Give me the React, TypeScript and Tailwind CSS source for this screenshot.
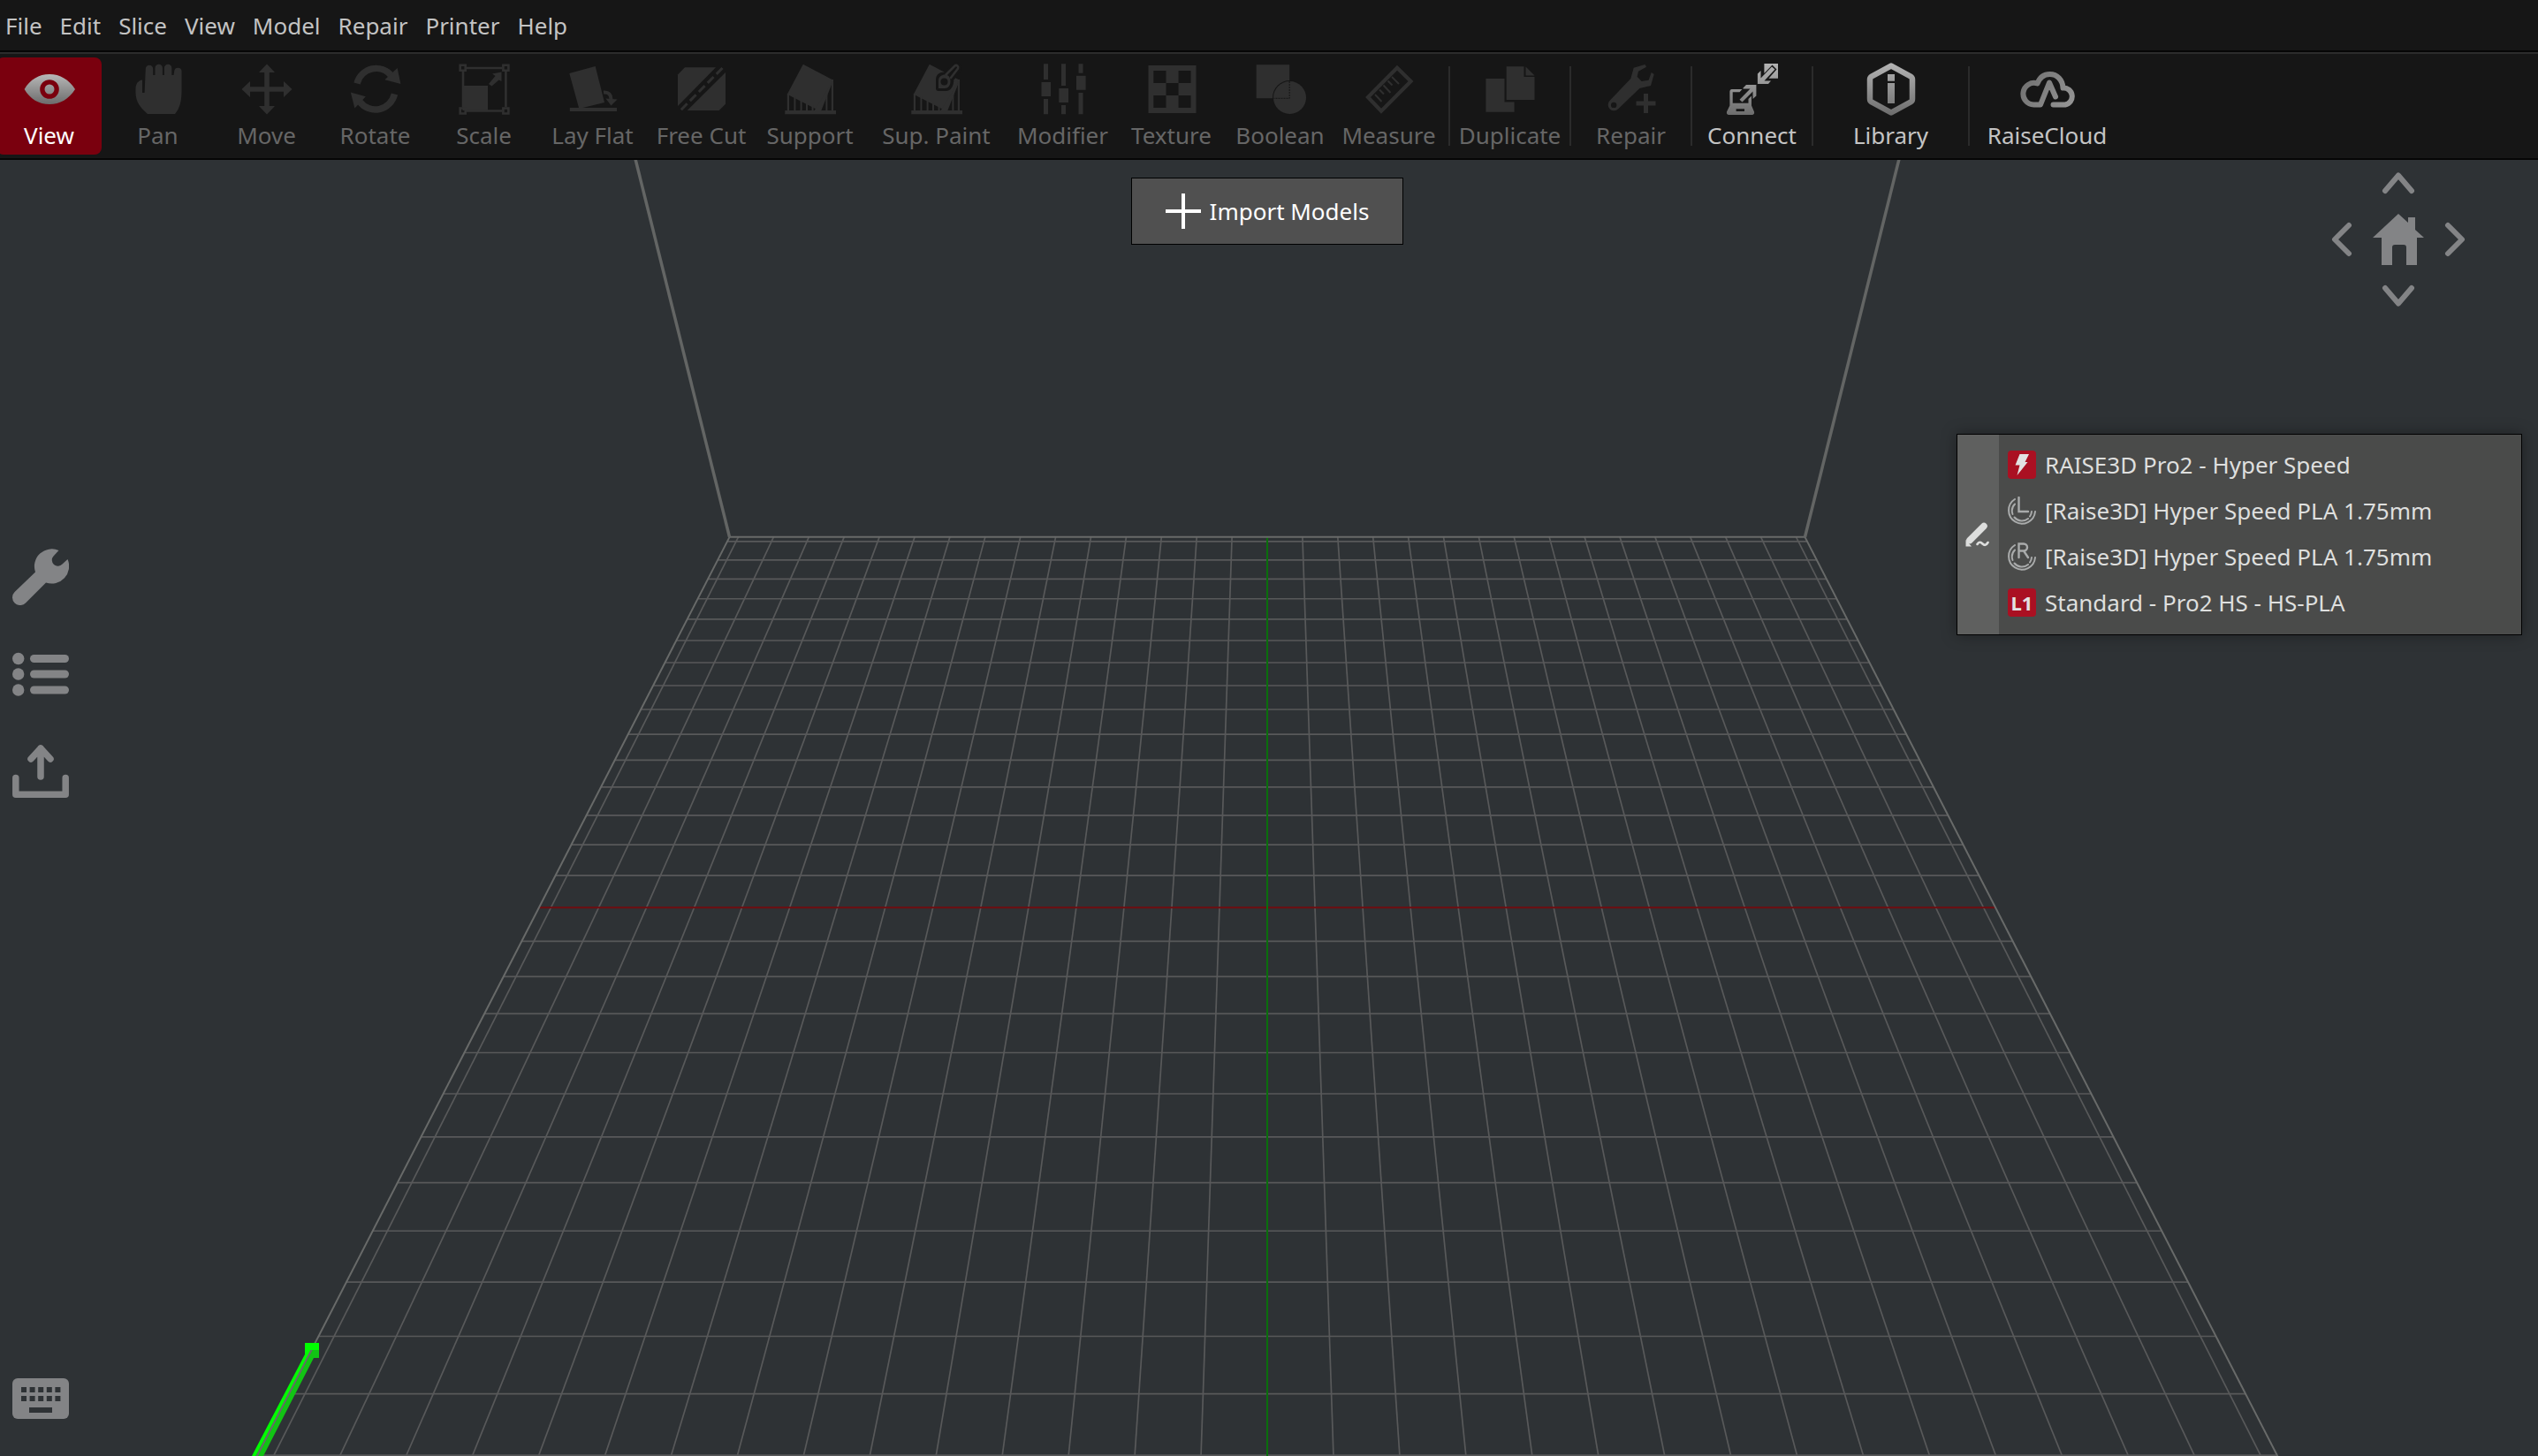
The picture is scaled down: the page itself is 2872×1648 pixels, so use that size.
import React from "react";

type Tone = "off" | "on";

/* ---------- toolbar icons (64 x 64) ---------- */

const BG = "#161616";

function Icon({ tone, children }: { tone: Tone; children: React.ReactNode }) {
  return (
    <svg
      viewBox="0 0 64 64"
      className="size-16 shrink-0"
      fill={tone === "on" ? "url(#metal)" : "#2f2f2f"}
      color="#2f2f2f"
      aria-hidden="true"
    >
      {children}
    </svg>
  );
}

function MetalGradient() {
  return (
    <svg className="absolute size-0" aria-hidden="true">
      <defs>
        <linearGradient id="metal" gradientUnits="userSpaceOnUse" x1="0" y1="2" x2="0" y2="62">
          <stop offset="0" stopColor="#b4b4b4" />
          <stop offset="1" stopColor="#6c6c6c" />
        </linearGradient>
        <linearGradient id="metalEye" gradientUnits="userSpaceOnUse" x1="0" y1="15" x2="0" y2="49">
          <stop offset="0" stopColor="#b8b8b8" />
          <stop offset="1" stopColor="#6c6c6c" />
        </linearGradient>
        <linearGradient id="metalCloud" gradientUnits="userSpaceOnUse" x1="0" y1="10" x2="64" y2="54">
          <stop offset="0" stopColor="#6c6c6c" />
          <stop offset="1" stopColor="#989898" />
        </linearGradient>
      </defs>
    </svg>
  );
}

const SupportShape = () => (
  <>
    <path d="M23.8 3.7 58 21.7 41 55.7 5.8 37.7Z" />
    <path d="M3.3 56H61v4.3H3.3Z" />
    <path d="M5.8 37h2.2v20H5.8ZM13.4 40h2v17h-2ZM20.6 44h2v13h-2ZM27 47h2v10h-2ZM33.6 50h2v7h-2ZM41.4 48h2v9h-2ZM49.4 34h2v23h-2ZM55.8 21h2.2v36h-2.2Z" />
    <path d="M58 21.7 36 57h8Z" />
  </>
);

const icons: Record<string, React.ReactNode> = {
  View: (
    <g fill="url(#metalEye)">
      <path
        fillRule="evenodd"
        d="M3.6 32C10 21 20 15 32 15s22 6 29 17C54 43 44 49 32 49S10 43 3.6 32ZM32 21.2a10.8 10.8 0 1 0 0 21.6 10.8 10.8 0 1 0 0-21.6Z"
      />
      <circle cx="32" cy="32" r="5.5" />
    </g>
  ),
  Pan: (
    <path d="M16.6 36H14V21.6C9.500 22 6.500 26 6.500 32v4C6.500 46 12 53 20 60H51c6-7 7.500-16 7.500-26V11a4.200 4.200 0 0 0-8.200 0l-.8 5h-2.200V8a4.200 4.200 0 0 0-8.400 0v8h-2V8a4.200 4.200 0 0 0-8.400 0v8h-2.300V9a4.200 4.200 0 0 0-8.400 0Z" />
  ),
  Move: (
    <path d="M32 3.500 41 13H34.800V29.200H51V23L60.500 32 51 41V34.800H34.800V51H41L32 60.500 23 51h6.200V34.800H13V41L3.500 32 13 23v6.200H29.200V13H23Z" />
  ),
  Rotate: (
    <>
      <path d="M11 25.500A22.500 23.500 0 0 1 50 17" fill="none" stroke="currentColor" strokeWidth="7.500" />
      <path d="M56.600 8 60.400 26 42.400 21.300Z" />
      <path d="M53.500 37.500A22.500 23.500 0 0 1 14 46" fill="none" stroke="currentColor" strokeWidth="7.500" />
      <path d="M3.800 35.500 20.800 40.300 8.400 53.500Z" />
    </>
  ),
  Scale: (
    <>
      <path d="M7.500 28H36v28H7.500Z" />
      <g fill="none" stroke="currentColor" strokeWidth="2.600">
        <path d="M4.700 4.700h6v6h-6ZM53.400 4.700h6v6h-6ZM4.700 53.500h6v6h-6ZM53.400 53.500h6v6h-6Z" />
        <path d="M12 8h40M12 56.500h40M8 12v40M56.400 12v40" />
      </g>
      <path d="M51.500 12.500V23l-3-1.500L40.500 28.500 37 26 44.500 17 41 14.500Z" />
    </>
  ),
  "Lay Flat": (
    <>
      <path d="M5.300 14 34.700 6 45 47 16.300 54Z" />
      <path d="M5.800 53H59v4H5.800Z" />
      <path d="M44 35.500c6-.5 8.500 3 8.500 8" fill="none" stroke="currentColor" strokeWidth="4" />
      <path d="M46.500 42.500 59.500 43.500 52.500 50.500Z" />
    </>
  ),
  "Free Cut": (
    <>
      <path d="M5 15.500 13 7.300H48L5 51Z" />
      <path d="M59 13V48.700L51.700 56H15.700Z" />
      <path d="M8.800 55.200 55.500 8" fill="none" stroke="currentColor" strokeWidth="3" strokeDasharray="9.700 4.500" />
    </>
  ),
  Support: <SupportShape />,
  "Sup. Paint": (
    <>
      <SupportShape />
      <g strokeLinejoin="round" strokeLinecap="round">
        <path
          d="M34 31V21c0-4 4-6 7-5L52 5c3-2 6 1 5 4L48 21c1 5-2 10-6 10Z"
          fill={BG}
          stroke={BG}
          strokeWidth="6"
        />
        <path d="M34 31V22c0-4 3.500-6.500 7.500-6.500 3.500 0 6 3 6 7.500 0 4.500-2.500 8-6.500 8Z" />
        <circle cx="40.500" cy="23.500" r="4" fill={BG} />
        <path d="M42.500 15.500 52.500 5.500c2-1.500 4.500.5 3.500 3L48 19" fill="none" stroke="currentColor" strokeWidth="2.600" />
      </g>
    </>
  ),
  Modifier: (
    <>
      <path d="M10 3.300h5V21h-5ZM10 43h5v17.300h-5ZM30 3.300h5V28h-5ZM30 50h5v10.300h-5ZM49.500 3.300h5v10.400h-5ZM49.500 36h5v24.300h-5Z" />
      <path d="M7.500 24H18v16H7.500ZM27.300 31H38v16H27.300ZM47 16.700h10.600v16H47Z" />
    </>
  ),
  Texture: (
    <path
      fillRule="evenodd"
      d="M5.500 5h54v54h-54ZM11.300 11v14h14.200V11ZM39.600 11v14h14V11ZM25.500 25v14h14.100V25ZM11.300 39v14h14.200V39ZM39.600 39v14h14V39Z"
    />
  ),
  Boolean: (
    <>
      <path d="M4.700 4.300h37.500v38H4.700Z" />
      <circle cx="42.500" cy="41.500" r="18.500" stroke={BG} strokeWidth="2" paintOrder="stroke" />
      <path d="M42.200 23v19.300H24.500" fill="none" stroke={BG} strokeWidth="1" strokeDasharray="2 1" />
    </>
  ),
  Measure: (
    <>
      <path d="M41 7.700 56.500 23 23 56.700 8 41Z" fill="none" stroke="currentColor" strokeWidth="4.200" />
      <path d="M16 38l7.500 8M21 32.500l5 5M25.500 27.500l8 8.500M30.500 22.500l5 5M35 18l8 8" fill="none" stroke="currentColor" strokeWidth="2" />
    </>
  ),
  Duplicate: (
    <>
      <path d="M4.400 20H25.500V46.500H36.600V57.700H4.400Z" />
      <path d="M27.700 6.300H47.500V18H59.500V44H27.700Z" />
      <path d="M49.500 6.500 59.500 16.500H49.500Z" />
    </>
  ),
  Repair: (
    <>
      <path
        fillRule="evenodd"
        d="M47.500 4 34.700 7.700 31.300 20 7.500 45A6.700 6.700 0 0 0 17.200 54.300L41.300 31 54 28 57.700 15 54.700 13 51.600 21.700 43.600 23 38.600 17.700 40 11.700 49 6.700ZM12.200 46.700a3.200 3.200 0 1 1 0 6.400 3.200 3.200 0 0 1 0-6.400Z"
      />
      <path d="M46 37h5v8.500h8.500v5H51V59h-5v-8.500h-8.500v-5H46Z" />
    </>
  ),
  Connect: (
    <>
      <path
        fillRule="evenodd"
        d="M8.500 32H20.500L17.500 35.300H9.700V47.700H27.500V43L31 39.500V50.500L34 57.500C34.500 59.500 33.500 61 31.500 61H5.500C3.500 61 2.500 59.500 3 57.500L6.400 50.500V34.500A2.500 2.500 0 0 1 8.500 32ZM13.600 54.300V57H23V54.300Z"
      />
      <path d="M21.500 30.500 25 27H36.400V39.500L32.500 43V34.500L20.500 46.500 17.500 43.800 29.500 31.500H21.500Z" />
      <path fillRule="evenodd" d="M45.400 3H61V19.700H50.500L59.500 9.500 54.500 4.500 45.400 14Z" />
      <path d="M37.900 14.500 41.500 11V19.500L54 6.500 57.500 9.500 45.500 22.500H53L50 26H37.900Z" />
    </>
  ),
  Library: (
    <>
      <path
        d="M32 5.500 54 17.500Q56 18.700 56 21V43Q56 45.300 54 46.500L32 58.500 10 46.500Q8 45.300 8 43V21Q8 18.700 10 17.500Z"
        fill="none"
        stroke="url(#metal)"
        strokeWidth="6.500"
        strokeLinejoin="round"
      />
      <path d="M28 15h8v7.700h-8ZM28 25h8v23h-8Z" />
    </>
  ),
  RaiseCloud: (
    <path
      d="M41 40.500 34 24.500 24 49.500H16.500A12.300 12.300 0 1 1 20.500 25.500C23 19 28 15 34.500 15 43 15 49 21.500 49.500 30.500A9.600 9.600 0 0 1 52 49.500H38.500"
      fill="none"
      stroke="url(#metalCloud)"
      strokeWidth="6"
      strokeLinecap="round"
      strokeLinejoin="round"
    />
  ),
};

/* ---------- data ---------- */

const menus = ["File", "Edit", "Slice", "View", "Model", "Repair", "Printer", "Help"];

type Tool = { name: string; wide?: boolean; enabled?: boolean; separator?: boolean };

const tools: Tool[] = [
  { name: "Pan" },
  { name: "Move" },
  { name: "Rotate" },
  { name: "Scale" },
  { name: "Lay Flat" },
  { name: "Free Cut" },
  { name: "Support" },
  { name: "Sup. Paint", wide: true },
  { name: "Modifier" },
  { name: "Texture" },
  { name: "Boolean" },
  { name: "Measure" },
  { name: "Duplicate", separator: true },
  { name: "Repair", separator: true },
  { name: "Connect", separator: true, enabled: true },
  { name: "Library", separator: true, enabled: true, wide: true },
  { name: "RaiseCloud", separator: true, enabled: true, wide: true },
];

/* ---------- header ---------- */

function MenuBar() {
  return (
    <nav className="flex h-[59px] items-center gap-5 border-b-2 border-[#060606] px-1.5 text-[#c3c3c3]">
      {menus.map((m) => (
        <button key={m} type="button" className="leading-8">
          {m}
        </button>
      ))}
    </nav>
  );
}

function ToolButton({ tool }: { tool: Tool }) {
  return (
    <>
      {tool.separator && <span className="mx-1 h-[90px] w-0.5 shrink-0 bg-[#2b2b2b]" />}
      <button
        type="button"
        disabled={!tool.enabled}
        className={`flex h-[110px] shrink-0 flex-col items-center pt-1 whitespace-nowrap ${
          tool.wide ? "w-[159px]" : "w-[119px]"
        } ${tool.enabled ? "text-[#c4c4c4]" : "text-[#666666]"}`}
      >
        <Icon tone={tool.enabled ? "on" : "off"}>{icons[tool.name]}</Icon>
        <span className="leading-10">{tool.name}</span>
      </button>
    </>
  );
}

function Toolbar() {
  return (
    <div
      role="toolbar"
      className="flex h-[122px] items-center gap-1 overflow-hidden border-t-2 border-b-2 border-t-[#2c2c2c] border-b-[#060606]"
    >
      <button
        type="button"
        className="-ml-1 flex h-[110px] w-[119px] shrink-0 flex-col items-center rounded-lg bg-[#7a000e] pt-1 text-white"
      >
        <Icon tone="on">{icons.View}</Icon>
        <span className="leading-10">View</span>
      </button>
      {tools.map((t) => (
        <ToolButton key={t.name} tool={t} />
      ))}
    </div>
  );
}

/* ---------- 3D build plate ---------- */

const CX = 1434;
const EDGE = 15.25;

/* Perspective projection of a plate point given in centimetres. */
function project(u: number, v: number): [number, number] {
  const depth = 43.036 + v;
  return [CX + (u * 2325.6) / depth, -756.7 + 68985 / depth];
}

function line(u1: number, v1: number, u2: number, v2: number) {
  const [x1, y1] = project(u1, v1);
  const [x2, y2] = project(u2, v2);
  return { x1, y1, x2, y2 };
}

function BuildPlate() {
  const steps = Array.from({ length: 31 }, (_, i) => i - 15).filter((n) => n !== 0);
  const [lx, ly] = project(-EDGE, EDGE);
  const [rx] = project(EDGE, EDGE);
  return (
    <svg
      viewBox="0 0 2872 1467"
      preserveAspectRatio="xMidYMin slice"
      className="absolute inset-0 size-full"
      aria-hidden="true"
    >
      <g stroke="#58595a" strokeWidth="1.7">
        {steps.map((n) => (
          <line key={`u${n}`} {...line(n, EDGE, n, -EDGE)} />
        ))}
        {steps.map((n) => (
          <line key={`v${n}`} {...line(-EDGE, n, EDGE, n)} />
        ))}
      </g>
      <line {...line(-EDGE, 0, EDGE, 0)} stroke="#6f0d10" strokeWidth="2" />
      <line {...line(0, EDGE, 0, -EDGE)} stroke="#0a6e0c" strokeWidth="2" />
      <path d="M345 1339H361V1347H353L290 1467H285L345 1352Z" fill="#00ff00" />
      <path d="M353 1347H361V1356H355L298 1467H289Z" fill="#12c314" />
      <g stroke="#686a69" strokeWidth="2">
        <line {...line(-EDGE, EDGE, -EDGE, -EDGE)} />
        <line {...line(EDGE, EDGE, EDGE, -EDGE)} />
        <line {...line(-EDGE, EDGE, EDGE, EDGE)} />
      </g>
      <path d="M345 1339H361V1347H345Z" fill="#00ff00" />
      <g stroke="#636564" strokeWidth="3.500">
        <line x1={lx} y1={ly} x2="719" y2="-1" />
        <line x1={rx} y1={ly} x2="2149" y2="-1" />
      </g>
    </svg>
  );
}

/* ---------- viewport controls ---------- */

function SideTools() {
  const cls = "size-16";
  return (
    <aside className="relative flex flex-col justify-between pt-[440px] pb-[33px] pl-3.5 text-[#838486]">
      <div className="flex flex-col items-start gap-[46px]">
        <button type="button" aria-label="Settings">
          <svg viewBox="0 0 64 64" className={cls} fill="currentColor">
            <path d="M52.500 2A19.700 19.700 0 0 0 26 26.500L2.600 49A8.800 8.800 0 0 0 15 61.500L38 38.500A19.700 19.700 0 0 0 62.500 12L56.500 17.500A6.600 6.600 0 0 1 46.500 8.500Z" />
          </svg>
        </button>
        <button type="button" aria-label="Model list">
          <svg viewBox="0 0 64 64" className={cls} fill="currentColor">
            <circle cx="6.700" cy="14.500" r="6.700" />
            <circle cx="6.700" cy="32" r="6.700" />
            <circle cx="6.700" cy="50" r="6.700" />
            <rect x="20" y="10" width="44" height="9" rx="4.500" />
            <rect x="20" y="27.500" width="44" height="9" rx="4.500" />
            <rect x="20" y="45.500" width="44" height="9" rx="4.500" />
          </svg>
        </button>
        <button type="button" aria-label="Export">
          <svg
            viewBox="0 0 64 64"
            className={cls}
            fill="none"
            stroke="currentColor"
            strokeWidth="7.500"
            strokeLinecap="round"
            strokeLinejoin="round"
          >
            <path d="M3.800 39.500V58.200H60.200V39.500M32 38V6M21 18 32 6 43 18" />
          </svg>
        </button>
      </div>
      <button type="button" aria-label="Keyboard shortcuts" className="self-start">
        <svg viewBox="0 0 64 64" className={cls}>
          <rect y="9" width="64" height="46" rx="6" fill="currentColor" />
          <path
            d="M10 22h45M10 32h45"
            stroke="#2e3235"
            strokeWidth="6"
            strokeDasharray="6 3.600"
            fill="none"
          />
          <path d="M19 42h26v6H19Z" fill="#2e3235" />
        </svg>
      </button>
    </aside>
  );
}

function Chevron({ d, w, h }: { d: string; w: number; h: number }) {
  return (
    <svg
      viewBox={`0 0 ${w} ${h}`}
      width={w}
      height={h}
      className="overflow-visible"
      fill="none"
      stroke="currentColor"
      strokeWidth="6"
      strokeLinecap="round"
      strokeLinejoin="round"
    >
      <path d={d} />
    </svg>
  );
}

function ViewControls() {
  return (
    <div className="mt-3.5 mr-[65px] grid grid-cols-[22px_58px_22px] grid-rows-[24px_58px_24px] gap-x-6 gap-y-[23px] text-[#838486]">
      <button type="button" aria-label="Rotate up" className="col-start-2 justify-self-center">
        <Chevron d="M3 21 18 3.500 33 21" w={36} h={24} />
      </button>
      <button type="button" aria-label="Rotate left" className="col-start-1 row-start-2 self-center">
        <Chevron d="M19 3 3 19 19 35" w={22} h={38} />
      </button>
      <button type="button" aria-label="Home view" className="col-start-2 row-start-2">
        <svg viewBox="0 0 58 58" width="58" height="58" fill="currentColor">
          <path d="M29 0 40 10V4H48V18L58 27H50V58H38V38Q38 35 35 35H25Q22 35 22 38V58H10V27H0Z" />
        </svg>
      </button>
      <button type="button" aria-label="Rotate right" className="col-start-3 row-start-2 self-center">
        <Chevron d="M3 3 19 19 3 35" w={22} h={38} />
      </button>
      <button type="button" aria-label="Rotate down" className="col-start-2 row-start-3 justify-self-center">
        <Chevron d="M3 3 18 20.500 33 3" w={36} h={24} />
      </button>
    </div>
  );
}

function Spool({ children }: { children: React.ReactNode }) {
  return (
    <svg
      viewBox="0 0 32 32"
      className="size-8"
      fill="none"
      stroke="#a9abab"
      strokeWidth="2"
      strokeLinecap="round"
      aria-hidden="true"
    >
      <path d="M8 3A15 15 0 1 0 31 17" />
      <path d="M8 8.500A11 11 0 0 0 5.500 20M7.500 23.500A11 11 0 0 0 23 25M25 22.500A11 11 0 0 0 27 17" />
      <g strokeWidth="2.400">{children}</g>
    </svg>
  );
}

function PrintSummary() {
  return (
    <section className="mt-36 flex h-[228px] w-[640px] border border-black bg-[#4a4b4a] text-[#dedfde] shadow-[0_0_16px_rgba(0,0,0,0.35)]">
      <button type="button" aria-label="Edit print settings" className="flex w-[47px] items-center justify-center bg-[#5f605f] pr-1">
        <svg viewBox="0 0 28 28" className="size-7" fill="none" stroke="#dddedd" strokeLinecap="round">
          <path d="M22 4.500 6 20.500" strokeWidth="7.500" />
          <path d="M1.500 20V27.500H8Z" fill="#dddedd" stroke="none" />
          <path d="M14.500 25c2-3.500 4-2.500 6-.5s4 2 6-1.500" strokeWidth="2.600" />
        </svg>
      </button>
      <ul className="flex flex-1 flex-col justify-center gap-3 pr-4 pb-0.5 pl-2.5 leading-10">
        <li className="flex h-10 items-center gap-2.5">
          <svg viewBox="0 0 32 32" className="size-8" aria-hidden="true">
            <rect width="32" height="32" rx="4" fill="#aa1022" />
            <path d="M13.500 4H24L19.500 13H22.500L10.500 28 13.500 16.500H8.500Z" fill="#e2e2e2" />
          </svg>
          <span>RAISE3D Pro2 - Hyper Speed</span>
        </li>
        <li className="flex h-10 items-center gap-2.5">
          <Spool>
            <path d="M12.500 1V17H23" />
          </Spool>
          <span>[Raise3D] Hyper Speed PLA 1.75mm</span>
        </li>
        <li className="flex h-10 items-center gap-2.5">
          <Spool>
            <path d="M12.500 17V1.500H18A4 4 0 0 1 18 9.500H12.500M18 9.500 23 17" />
          </Spool>
          <span>[Raise3D] Hyper Speed PLA 1.75mm</span>
        </li>
        <li className="flex h-10 items-center gap-2.5">
          <span className="flex size-8 items-center justify-center rounded bg-[#aa1022] text-[22px] leading-8 font-bold text-[#e2e2e2]">
            L1
          </span>
          <span>Standard - Pro2 HS - HS-PLA</span>
        </li>
      </ul>
    </section>
  );
}

export default function App() {
  return (
    <div className="flex min-h-screen flex-col bg-[#161616] font-['Noto_Sans',sans-serif] text-[26px]">
      <MetalGradient />
      <header>
        <MenuBar />
        <Toolbar />
      </header>
      <main className="relative grid flex-1 grid-cols-[1fr_auto_1fr] overflow-hidden bg-[#2e3235]">
        <BuildPlate />
        <SideTools />
        <button
          type="button"
          className="relative mt-5 mr-1 flex h-[76px] w-[308px] items-center justify-center gap-2.5 self-start border border-black bg-[#505050] text-white"
        >
          <svg viewBox="0 0 40 40" className="size-10" stroke="white" strokeWidth="4" aria-hidden="true">
            <path d="M20 0V40M0 20H40" />
          </svg>
          Import Models
        </button>
        <div className="relative flex flex-col items-end justify-self-end pr-[18px]">
          <ViewControls />
          <PrintSummary />
        </div>
      </main>
    </div>
  );
}
